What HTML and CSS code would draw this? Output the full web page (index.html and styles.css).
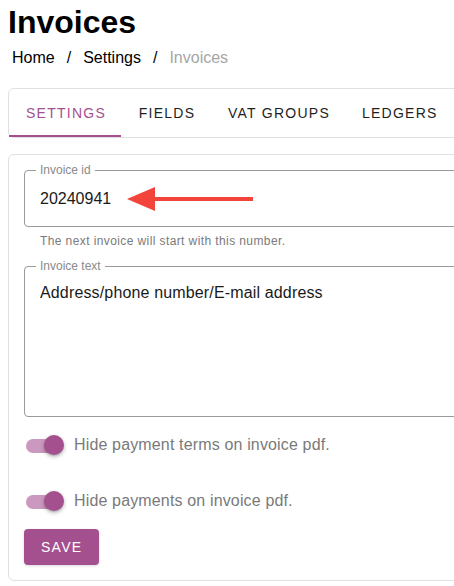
FILE: index.html
```html
<!DOCTYPE html>
<html>
<head>
<meta charset="utf-8">
<link rel="stylesheet" href="styles.css">
</head>
<body>
<div class="page">
  <h1 class="title">Invoices</h1>
  <nav class="crumbs">
    <span class="crumb">Home</span>
    <span class="divider">/</span>
    <span class="crumb">Settings</span>
    <span class="divider">/</span>
    <span class="crumb disabled">Invoices</span>
  </nav>

  <div class="card tabs">
    <div class="tab active">Settings</div>
    <div class="tab">Fields</div>
    <div class="tab">VAT groups</div>
    <div class="tab">Ledgers</div>
  </div>

  <div class="card form">
    <div class="field field-id">
      <span class="label">Invoice id</span>
      <div class="value">20240941</div>
      <svg class="arrow" width="140" height="30" viewBox="0 0 140 30">
        <path d="M28 11 L126 11 L126 15 L28 15 Z" fill="#f2443a"/>
        <path d="M0 13 L28 1 L28 25 Z" fill="#f2443a"/>
      </svg>
    </div>
    <div class="hint">The next invoice will start with this number.</div>

    <div class="field field-text">
      <span class="label">Invoice text</span>
      <div class="value">Address/phone number/E-mail address</div>
    </div>

    <label class="switch-row first">
      <span class="switch"><span class="track"></span><span class="thumb"></span></span>
      <span class="switch-label">Hide payment terms on invoice pdf.</span>
    </label>
    <label class="switch-row second">
      <span class="switch"><span class="track"></span><span class="thumb"></span></span>
      <span class="switch-label">Hide payments on invoice pdf.</span>
    </label>

    <div class="actions">
      <button class="btn">Save</button>
    </div>
  </div>
</div>
</body>
</html>
```

FILE: styles.css
```css
html, body {
  margin: 0;
  padding: 0;
  overflow: hidden;
  background: #fff;
}

body {
  font-family: "Liberation Sans", Arial, sans-serif;
  color: #000;
}

.page {
  width: 640px;
  padding: 4px 8px 0 8px;
}

.title {
  margin: 0;
  font-size: 32px;
  line-height: 36px;
  font-weight: 700;
}

.crumbs {
  display: flex;
  align-items: center;
  margin-top: 6px;
  padding-left: 4px;
  font-size: 16px;
  line-height: 24px;
}

.divider {
  padding: 0 12px;
}

.crumb.disabled {
  color: #a6a6a6;
}

.card {
  background: #fff;
  border: 1px solid #e0e0e0;
  border-radius: 6px;
}

.tabs {
  display: flex;
  margin-top: 18px;
  height: 48px;
}

.tab {
  min-width: 90px;
  padding: 0 15px 0 17px;
  box-sizing: border-box;
  display: flex;
  align-items: center;
  justify-content: center;
  font-size: 14px;
  letter-spacing: 1.25px;
  text-transform: uppercase;
  color: #1f1f1f;
  position: relative;
}

.tab.active {
  color: #a4508f;
}

.tab.active::after {
  content: "";
  position: absolute;
  left: 0;
  right: 0;
  bottom: 0;
  height: 2px;
  background: #a4508f;
}

.form {
  margin-top: 16px;
  padding: 15px 15px 15px 15px;
  display: flex;
  flex-direction: column;
  align-items: flex-start;
}

.field {
  position: relative;
  box-sizing: border-box;
  width: 100%;
  border: 1px solid #9a9a9a;
  border-radius: 4px;
  padding: 0 15px;
}

.field .label {
  position: absolute;
  top: -8px;
  left: 11px;
  padding: 0 4px;
  background: #fff;
  font-size: 12px;
  line-height: 15px;
  color: #8a8a8a;
}

.field-id {
  height: 57px;
  display: flex;
  align-items: center;
}

.field-id .value {
  font-size: 16px;
  line-height: 20px;
  color: #1a1a1a;
  padding-top: 1px;
}

.arrow {
  position: absolute;
  left: 102px;
  top: 15px;
}

.hint {
  margin-top: 6px;
  padding-left: 16px;
  font-size: 12px;
  letter-spacing: 0.4px;
  line-height: 16px;
  color: #7a7a7a;
}

.field-text {
  margin-top: 17px;
  height: 151px;
  padding-top: 16px;
}

.field-text .value {
  font-size: 16px;
  letter-spacing: 0.15px;
  line-height: 20px;
  color: #1a1a1a;
}

.switch-row {
  display: flex;
  align-items: center;
  height: 24px;
  gap: 10px;
  padding-left: 2px;
}

.switch-row.first {
  margin-top: 16px;
}

.switch-row.second {
  margin-top: 32px;
}

.switch {
  position: relative;
  width: 38px;
  height: 24px;
  flex: none;
}

.track {
  position: absolute;
  left: 0;
  top: 6px;
  width: 36px;
  height: 14px;
  border-radius: 7px;
  background: #cb98bf;
}

.thumb {
  position: absolute;
  left: 18px;
  top: 2px;
  width: 20px;
  height: 20px;
  border-radius: 50%;
  background: #a4508f;
  box-shadow: 0 2px 4px rgba(0, 0, 0, 0.25), 0 1px 2px rgba(0, 0, 0, 0.15);
}

.switch-label {
  font-size: 16px;
  letter-spacing: 0.15px;
  color: #7a7a7a;
  line-height: 20px;
}

.actions {
  margin-top: 16px;
}

.btn {
  height: 36px;
  padding: 0 17px;
  border: none;
  border-radius: 4px;
  background: #a4508f;
  color: #fff;
  font-family: "Liberation Sans", Arial, sans-serif;
  font-size: 14px;
  letter-spacing: 1.25px;
  text-transform: uppercase;
  box-shadow: 0 1px 3px rgba(0, 0, 0, 0.15);
}
```
